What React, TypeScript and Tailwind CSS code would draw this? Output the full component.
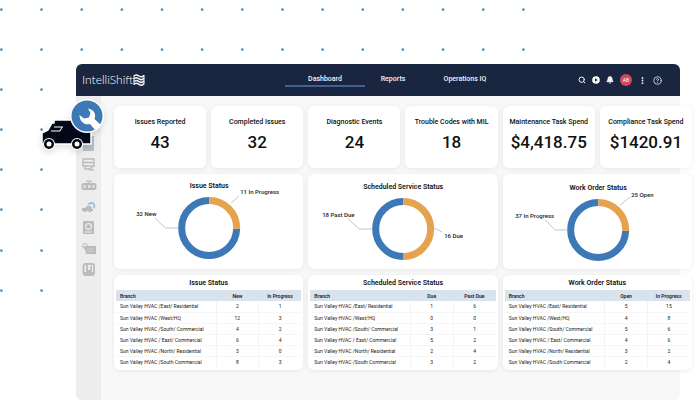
import { Search, Bell, EllipsisVertical, CircleQuestionMark } from "lucide-react";

const stats = [
  { label: "Issues Reported", value: "43" },
  { label: "Completed Issues", value: "32" },
  { label: "Diagnostic Events", value: "24" },
  { label: "Trouble Codes with MIL", value: "18" },
  { label: "Maintenance Task Spend", value: "$4,418.75" },
  { label: "Compliance Task Spend", value: "$1420.91" },
];

type Label = { text: string; x: number; y: number; line: string };

const charts: { title: string; cy: number; share: number; labels: Label[] }[] = [
  {
    title: "Issue Status",
    cy: 54,
    share: 0.255,
    labels: [
      { text: "32 New", x: 22, y: 42, line: "M41 44 L51 54 H64" },
      { text: "11 In Progress", x: 126, y: 20, line: "M117 29 L125 22" },
    ],
  },
  {
    title: "Scheduled Service Status",
    cy: 55,
    share: 0.5,
    labels: [
      { text: "18 Past Due", x: 14, y: 43, line: "M40 45 L51 55 H64" },
      { text: "16 Due", x: 136, y: 64, line: "M126 54 L134 58" },
    ],
  },
  {
    title: "Work Order Status",
    cy: 56,
    share: 0.255,
    labels: [
      { text: "37 In Progress", x: 12, y: 44, line: "M42 46 L52 56 H65" },
      { text: "25 Open", x: 128, y: 23, line: "M117 31 L127 23" },
    ],
  },
];

const branches = [
  "Sun Valley HVAC /East/ Residential",
  "Sun Valley HVAC /West/HQ",
  "Sun Valley HVAC /South/ Commercial",
  "Sun Valley HVAC / East/ Commercial",
  "Sun Valley HVAC /North/ Residential",
  "Sun Valley HVAC /South Commercial",
];

const tables = [
  { title: "Issue Status", columns: ["New", "In Progress"], rows: [[2, 1], [12, 3], [4, 2], [6, 4], [3, 0], [8, 3]] },
  { title: "Scheduled Service Status", columns: ["Due", "Past Due"], rows: [[1, 6], [0, 0], [3, 1], [5, 2], [2, 4], [3, 2]] },
  { title: "Work Order Status", columns: ["Open", "In Progress"], rows: [[5, 15], [4, 8], [5, 6], [4, 6], [3, 2], [2, 4]] },
];

const dotRows = [
  { y: 10, count: 14 },
  { y: 50, count: 14 },
  { y: 90, count: 2 },
  { y: 130, count: 2 },
  { y: 170, count: 2 },
  { y: 210, count: 2 },
  { y: 251, count: 2 },
  { y: 291, count: 2 },
];

const card = "rounded-md bg-white shadow-[0_1px_5px_rgba(0,0,0,0.07)]";

const Dots = () => (
  <svg className="absolute left-0 top-0" width="560" height="300" fill="#3d93c0" aria-hidden="true">
    {dotRows.map((row) =>
      Array.from({ length: row.count }, (_, i) => (
        <circle key={`${row.y}-${i}`} cx={1.4 + i * 40.15} cy={row.y - 0.4} r="1.3" />
      ))
    )}
  </svg>
);

const Logo = () => (
  <a href="#" className="flex items-center font-[Lato,sans-serif] text-[12px] font-light leading-4 text-white">
    IntelliShift
    <svg width="12" height="12" viewBox="0 0 12 12" fill="none" stroke="#f1f5f9" strokeWidth="1.5" aria-hidden="true">
      <path d="M0.8 2.2 C2.5 0 4.2 0.8 6 2 S9.5 3.2 11.2 1.2" />
      <path d="M0.8 5 C2.5 2.8 4.2 3.6 6 4.8 S9.5 6 11.2 4" />
      <path d="M0.8 7.8 C2.5 5.6 4.2 6.4 6 7.6 S9.5 8.8 11.2 6.8" />
      <path d="M0.8 10.6 C2.5 8.4 4.2 9.2 6 10.4 S9.5 11.6 11.2 9.6" />
      <path d="M1 2v8.6M11 1.4v8.6" strokeWidth="0.9" />
    </svg>
  </a>
);

const Header = () => (
  <header className="flex h-8 items-center rounded-t-md bg-[#1a263f] pl-1.5 pr-[18px]">
    <div className="w-[203px] shrink-0">
      <Logo />
    </div>
    <nav className="flex flex-1 items-center text-[7px] font-medium leading-3 text-slate-100">
      <a href="#" className="w-20 border-b-2 border-[#3f5f9c] text-center">Dashboard</a>
      <a href="#" className="w-14 border-b-2 border-transparent text-center">Reports</a>
      <a href="#" className="ml-1 w-20 border-b-2 border-transparent text-center">Operations IQ</a>
    </nav>
    <div className="flex items-center gap-1.5 text-slate-100">
      <button type="button" aria-label="Search"><Search size={8} strokeWidth={3} /></button>
      <button type="button" aria-label="Play">
        <svg width="8" height="8" viewBox="0 0 8 8" aria-hidden="true">
          <circle cx="4" cy="4" r="3.8" fill="#fff" />
          <path d="M3 2.2 L5.8 4 L3 5.8z" fill="#1a263f" />
        </svg>
      </button>
      <button type="button" aria-label="Notifications"><Bell size={8} fill="currentColor" strokeWidth={3} /></button>
      <button type="button" className="size-3 rounded-full bg-[#d4475f] text-center text-[5px] leading-3 text-white">AB</button>
      <button type="button" aria-label="More"><EllipsisVertical size={9} strokeWidth={3} /></button>
      <button type="button" aria-label="Help"><CircleQuestionMark size={9} strokeWidth={2} /></button>
    </div>
  </header>
);

const Sidebar = () => (
  <aside className="w-[25px] shrink-0 rounded-bl-md bg-[#ededee] pt-10">
    <div className="flex flex-col items-center gap-1.5 text-[#b9bbbf]">
      <button type="button" aria-label="Vehicles">
        <svg width="15" height="15" viewBox="0 0 15 15">
          <path d="M2 0h11v15H2z" fill="#b8c0ce" />
        </svg>
      </button>
      <button type="button" aria-label="Monitor">
        <svg width="15" height="15" viewBox="0 0 15 15" fill="none" stroke="currentColor" strokeWidth="1.4">
          <path d="M2 2h11v7H2zM2 5.5h11M4 9v3h5M12 9l-3 3" />
          <path d="M8 13h5" />
        </svg>
      </button>
      <button type="button" aria-label="Devices">
        <svg width="16" height="15" viewBox="0 0 16 15" fill="currentColor">
          <rect x="0.5" y="5" width="15" height="7" rx="2" />
          <path d="M5 2.5h6v1.2H5zM7.400 3h1.200v2H7.400z" />
          <path d="M2.500 7h2v3h-2zM7 7h2.500v3H7zM11.500 7h2v3h-2z" fill="#e4e4e6" />
        </svg>
      </button>
      <button type="button" aria-label="Maintenance">
        <svg width="15" height="15" viewBox="0 0 15 15" fill="currentColor">
          <path d="M1 9h3l2-2h4l1 3h1v2H1z" />
          <path d="M7.500 6a3 3 0 1 1 5 3" fill="none" stroke="#a9bdd5" strokeWidth="2" />
          <circle cx="4" cy="12" r="1.300" />
          <circle cx="9" cy="12" r="1.300" />
        </svg>
      </button>
      <button type="button" aria-label="Records">
        <svg width="15" height="15" viewBox="0 0 15 15" fill="currentColor">
          <rect x="2" y="1" width="11" height="13" rx="1" />
          <circle cx="7.500" cy="6.500" r="2.800" fill="none" stroke="#ededee" strokeWidth="1.200" />
          <path d="M4 12h7" stroke="#ededee" />
        </svg>
      </button>
      <button type="button" aria-label="Fuel">
        <svg width="15" height="15" viewBox="0 0 15 15" fill="currentColor">
          <path d="M3 5h12v8H5z" />
          <circle cx="4" cy="5" r="2.500" fill="none" stroke="currentColor" />
          <path d="M6 8h7M6 10.500h7" stroke="#cfd0d3" />
        </svg>
      </button>
      <button type="button" aria-label="Reports">
        <svg width="15" height="15" viewBox="0 0 15 15" fill="none" stroke="currentColor" strokeWidth="1.800">
          <rect x="2.500" y="2" width="10.500" height="11" rx="2" />
          <path d="M6 2v7h4V4M3 11h9" />
        </svg>
      </button>
    </div>
  </aside>
);

const Donut = ({ title, cy, share, labels }: (typeof charts)[number]) => {
  const r = 27.5;
  const length = 2 * Math.PI * r;
  return (
    <section className={`${card} h-[95px] overflow-hidden`}>
      <svg className="h-full w-full" viewBox="0 0 189 95" role="img" aria-label={title}>
        <text x="95" y={cy - 40} textAnchor="middle" fontSize="7" fontWeight="600" fill="#111">{title}</text>
        <g fill="none" strokeWidth="7" transform={`rotate(-90 95 ${cy})`}>
          <circle cx="95" cy={cy} r={r} stroke="#3e79b7" strokeDasharray={`${length * (1 - share)} ${length}`} strokeDashoffset={-length * share} />
          <circle cx="95" cy={cy} r={r} stroke="#e5a350" strokeDasharray={`${length * share} ${length}`} />
        </g>
        {labels.map((label) => (
          <g key={label.text}>
            <path d={label.line} fill="none" stroke="#b5b5b5" strokeWidth="0.8" />
            <text x={label.x} y={label.y} fontSize="6" fontWeight="500" fill="#222">{label.text}</text>
          </g>
        ))}
      </svg>
    </section>
  );
};

const BranchTable = ({ title, columns, rows }: (typeof tables)[number]) => (
  <section className={`${card} h-[95px] px-0.5 pt-0.5`}>
    <h2 className="text-center text-[7px] font-semibold leading-[13px]">{title}</h2>
    <table className="w-full table-fixed border-collapse text-[5px] leading-[10px] text-[#222]">
      <thead>
        <tr className="h-[11px] bg-[#d8e3ee]">
          <th className="w-[54%] pl-1 text-left font-semibold">Branch</th>
          {columns.map((column) => (
            <th key={column} className="font-semibold">{column}</th>
          ))}
        </tr>
      </thead>
      <tbody>
        {rows.map((row, i) => (
          <tr key={branches[i]} className="h-[11px] border-b border-[#f6f6f6] last:border-0">
            <td className="whitespace-nowrap pl-1">{branches[i]}</td>
            {row.map((value, j) => (
              <td key={j} className="border-l border-[#f4f4f4] text-center">{value}</td>
            ))}
          </tr>
        ))}
      </tbody>
    </table>
  </section>
);

const Truck = () => (
  <svg className="absolute left-9 top-24 drop-shadow-md" width="76" height="60" viewBox="0 0 76 60" aria-hidden="true">
    <path d="M18 24h37v24H6V37l6-3 4-7h2z" fill="#020817" stroke="#fff" strokeWidth="1.5" strokeLinejoin="round" />
    <path d="M18 31h9M15 35h9l2-4" fill="none" stroke="#fff" strokeWidth="1" />
    {[13, 41].map((x) => (
      <g key={x}>
        <circle cx={x} cy="48" r="6" fill="#fff" />
        <circle cx={x} cy="48" r="5" fill="#020817" />
        <circle cx={x} cy="48" r="2.500" fill="#fff" />
      </g>
    ))}
    <circle cx="51" cy="20" r="17" fill="#fff" />
    <circle cx="51" cy="20" r="15.500" fill="#3e79b7" />
    <path d="M52 12.500C57.500 13 60.500 18 58.500 23L65 29L59.500 34.500L54 28C48.500 29.500 43.500 25.500 43.500 19L48 22.500L53 21.500L54.500 17z" fill="#fff" />
  </svg>
);

const App = () => (
  <main className="relative min-h-screen overflow-hidden bg-white pl-[76px] pr-5 pt-16 font-[Roboto,sans-serif] text-[#111]">
    <Dots />
    <div className="relative flex min-h-[336px] flex-col">
      <Header />
      <div className="flex flex-1 rounded-b-md bg-[#f8f8f9]">
        <Sidebar />
        <div className="-mr-3 flex min-w-0 flex-1 flex-col gap-1.5 pl-[13px] pt-2.5">
          <div className="grid grid-cols-6 gap-[5px]">
            {stats.map((stat) => (
              <section key={stat.label} className={`${card} h-[62px] pt-2.5 text-center`}>
                <h2 className="whitespace-nowrap text-[7px] font-medium leading-3">{stat.label}</h2>
                <p className="pt-1 text-[17px] font-medium leading-5">{stat.value}</p>
              </section>
            ))}
          </div>
          <div className="grid grid-cols-3 gap-[5px]">
            {charts.map((chart) => (
              <Donut key={chart.title} {...chart} />
            ))}
          </div>
          <div className="grid grid-cols-3 gap-[5px]">
            {tables.map((table) => (
              <BranchTable key={table.title} {...table} />
            ))}
          </div>
        </div>
      </div>
    </div>
    <Truck />
  </main>
);

export default App;
